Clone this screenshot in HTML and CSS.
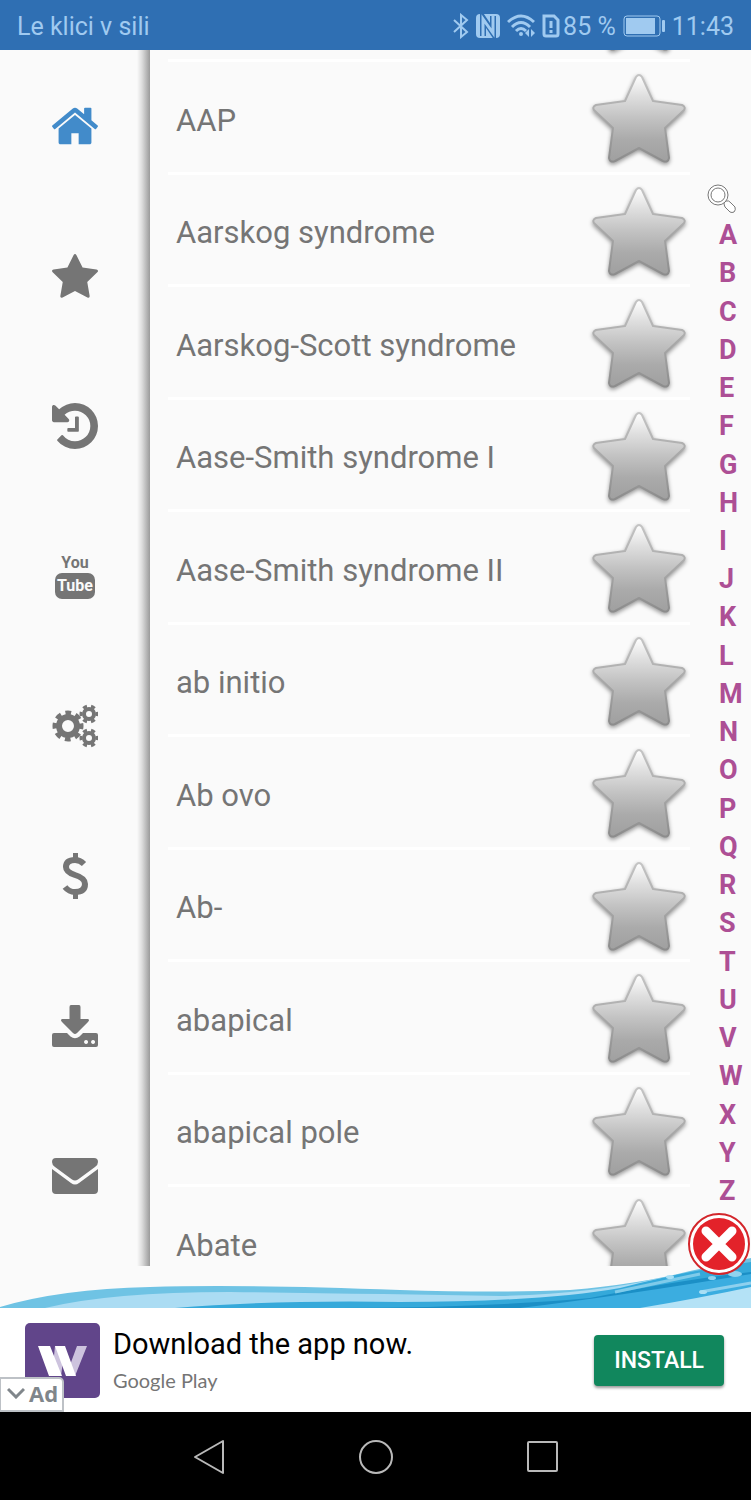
FILE: index.html
```html
<!DOCTYPE html>
<html lang="en">
<head>
    <meta charset="UTF-8">
    <meta name="viewport" content="width=device-width, initial-scale=1.0">
    <title>Medical Dictionary</title>
    <link rel="stylesheet" href="styles.css">
</head>
<body>
    <!-- Shared shapes -->
    <svg class="defs" width="0" height="0" aria-hidden="true">
        <defs>
            <linearGradient id="starFill" x1="0" y1="0" x2="0" y2="1">
                <stop offset="0" stop-color="#ffffff"/>
                <stop offset="0.25" stop-color="#dedede"/>
                <stop offset="0.5" stop-color="#c2c2c2"/>
                <stop offset="0.75" stop-color="#aaaaaa"/>
                <stop offset="1" stop-color="#a0a0a0"/>
            </linearGradient>
            <linearGradient id="starEdge" x1="0" y1="0" x2="0" y2="1">
                <stop offset="0" stop-color="#c4c4c4"/>
                <stop offset="1" stop-color="#8c8c8c"/>
            </linearGradient>
            <symbol id="star" viewBox="0 0 94 94">
                <path d="M44 4Q47 0 50 4L61 28L90 32Q94 34 92 37L73 55L77 85Q76 90 71 88L47 75L23 88Q18 90 17 85L21 55L2 37Q0 34 4 32L33 28Z" fill="url(#starFill)" stroke="url(#starEdge)" stroke-width="2" stroke-linejoin="round"/>
            </symbol>
        </defs>
    </svg>

    <header class="status-bar">
        <span>Le klici v sili</span>
        <div class="status-icons">
            <svg width="16" height="26" viewBox="0 0 16 26" fill="none" stroke="currentColor" stroke-width="2"><path d="M1 7L14 19L8 24V2L14 7L1 19"/></svg>
            <svg width="24" height="24" viewBox="0 0 24 24"><rect x="0" y="0" width="24" height="24" rx="4" fill="currentColor"/><path d="M7 22V4L17 19V2" fill="none" stroke="#2f6fb3" stroke-width="6"/><path d="M7 22V5L17 19V2" fill="none" stroke="currentColor" stroke-width="3"/></svg>
            <svg width="28" height="24" viewBox="0 0 28 24" fill="none" stroke="currentColor" stroke-width="3"><path d="M1 8Q14 -4 27 8M5 13Q14 4 23 13M9 17Q14 12 19 17"/><circle cx="14" cy="20" r="2" fill="currentColor" stroke="none"/><path d="M22 15V23L18 19ZM24 15V23L28 19Z" fill="currentColor" stroke="none"/></svg>
            <svg width="18" height="24" viewBox="0 0 18 24" fill="none" stroke="currentColor" stroke-width="3"><path d="M2 2H12L16 6V20Q16 22 14 22H4Q2 22 2 20Z"/><path d="M9 7V14M9 16V19"/></svg>
            <span class="battery-level">85 %</span>
            <svg width="42" height="22" viewBox="0 0 42 22"><rect x="1" y="1" width="36" height="20" rx="3" fill="none" stroke="currentColor" stroke-width="1"/><rect x="3" y="3" width="29" height="16" fill="currentColor"/><rect x="39" y="5" width="3" height="12" rx="1" fill="currentColor"/></svg>
            <span>11:43</span>
        </div>
    </header>

    <main class="content">
        <svg class="wave" viewBox="0 0 751 50" preserveAspectRatio="none" aria-hidden="true">
            <path d="M0 49Q60 31 150 29Q240 26 400 32Q500 35 570 32Q640 26 690 13L751 0V50H0Z" fill="#6fc3e4"/>
            <path d="M45 50Q110 34 230 34Q380 36 500 38Q590 36 660 20L751 6V50Z" fill="#abdcf3"/>
            <path d="M175 50Q270 42 400 44Q540 44 620 30Q690 12 751 4V50Z" fill="#35a9da"/>
            <path d="M340 50Q480 50 590 40Q680 22 751 14V22Q680 30 600 50Z" fill="#1b8fc6"/>
            <path d="M520 50Q620 38 751 16V50Z" fill="#3bade0"/>
            <path d="M640 50Q700 40 751 29V50Z" fill="#b4e2f6"/>
            <path d="M700 34L751 25" stroke="#8ed0ee" stroke-width="3"/>
            <path d="M615 34L700 16" stroke="#7fcbea" stroke-width="3" fill="none"/>
            <ellipse cx="735" cy="16" rx="7" ry="3" fill="#8fd3ef"/>
            <ellipse cx="712" cy="20" rx="4" ry="2" fill="#8fd3ef"/>
            <ellipse cx="703" cy="34" rx="4" ry="2" fill="#a8dff5"/>
            <ellipse cx="670" cy="19" rx="4" ry="2" fill="#a8dff5"/>
        </svg>

        <nav class="sidebar">
            <a class="active" href="#home" aria-label="Home">
                <svg viewBox="89 89 1614 1614"><path d="M1472 992v480q0 26-19 45t-45 19h-384v-384h-256v384h-384q-26 0-45-19t-19-45v-480q0-1 .5-3t.5-3l575-474 575 474q1 2 1 6zm223-69l-62 74q-8 9-21 11h-3q-13 0-21-7l-692-577-692 577q-12 8-24 7-13-2-21-11l-62-74q-8-10-7-23.5t11-21.5l719-599q32-26 76-26t76 26l244 204v-195q0-14 9-23t23-9h192q14 0 23 9t9 23v408l219 182q10 8 11 21.5t-7 23.5z"/></svg>
            </a>
            <a href="#favorites" aria-label="Favorites">
                <svg viewBox="64 0 1664 1664"><path d="M1728 647q0 22-26 48l-363 354 86 500q1 7 1 20 0 21-10.5 35.5t-30.5 14.5q-19 0-40-12l-449-236-449 236q-22 12-40 12-21 0-31.5-14.5t-10.5-35.5q0-6 2-20l86-500-364-354q-25-27-25-48 0-37 56-46l502-73 225-455q19-41 49-41t49 41l225 455 502 73q56 9 56 46z"/></svg>
            </a>
            <a href="#history" aria-label="History">
                <svg viewBox="128 128 1536 1536"><path d="M1664 896q0 156-61 298t-164 245-245 164-298 61q-172 0-327-72.5t-264-204.5q-7-10-6.5-22.5t8.5-20.5l137-138q10-9 25-9 16 2 23 12 73 95 179 147t225 52q104 0 198.5-40.5t163.5-109.5 109.5-163.5 40.5-198.5-40.5-198.5-109.5-163.5-163.5-109.5-198.5-40.5q-98 0-188 35.5t-160 101.5l137 138q31 30 14 69-17 40-59 40h-448q-26 0-45-19t-19-45v-448q0-42 40-59 39-17 69 14l130 129q107-101 244.5-156.5t284.5-55.5q156 0 298 61t245 164 164 245 61 298zm-640-288v448q0 14-9 23t-23 9h-320q-14 0-23-9t-9-23v-64q0-14 9-23t23-9h224v-352q0-14 9-23t23-9h64q14 0 23 9t9 23z"/></svg>
            </a>
            <a class="youtube" href="#youtube">
                <span class="you">You</span>
                <span class="tube">Tube</span>
            </a>
            <a href="#settings" aria-label="Settings">
                <svg class="outline" viewBox="0 0 46 46">
                    <circle cx="16" cy="23" r="9" stroke-width="6"/>
                    <circle cx="16" cy="23" r="13" stroke-width="5" pathLength="160" stroke-dasharray="11 9" stroke-dashoffset="5"/>
                    <circle cx="37" cy="11" r="5" stroke-width="4"/>
                    <circle cx="37" cy="11" r="8" stroke-width="3" pathLength="120" stroke-dasharray="10 10" stroke-dashoffset="5"/>
                    <circle cx="37" cy="35" r="5" stroke-width="4"/>
                    <circle cx="37" cy="35" r="8" stroke-width="3" pathLength="120" stroke-dasharray="10 10" stroke-dashoffset="5"/>
                </svg>
            </a>
            <a href="#donate" aria-label="Donate">
                <svg viewBox="0 0 46 46"><path d="M32 11Q28 7 23 7Q14 7 14 14Q14 19 23 22Q33 25 33 31Q33 39 23 39Q17 39 13 34" fill="none" stroke="currentColor" stroke-width="6"/><path d="M21 0H26V8H21ZM21 38H26V46H21Z"/></svg>
            </a>
            <a href="#download" aria-label="Download">
                <svg viewBox="0 0 46 46"><path d="M19 2H27Q28.500 2 28.500 4V16H36Q38 17 36 19L25 30Q23 32 21 30L10 19Q8 17 10 16H17.500V4Q17.500 2 19 2Z"/><path fill-rule="evenodd" d="M2 30H15L18.500 33.500Q23 37 27.500 33.500L31 30H44Q46 30 46 32V42Q46 44 44 44H2Q0 44 0 42V32Q0 30 2 30ZM34 37a2 2 0 1 0 0.100 0ZM41 37a2 2 0 1 0 0.100 0Z"/></svg>
            </a>
            <a href="#contact" aria-label="Contact">
                <svg viewBox="0 0 46 46"><path d="M4 5H42Q46 5 46 9Q46 12 43 14L26 26.500Q23 28.500 20 26.500L3 14Q0 12 0 9Q0 5 4 5Z"/><path d="M0 16L19 30Q23 33 27 30L46 16V37Q46 41 42 41H4Q0 41 0 37Z"/></svg>
            </a>
        </nav>

        <section class="list">
            <ul class="terms">
                <li><span></span><button aria-label="Favorite"><svg><use href="#star"/></svg></button></li>
                <li><span>AAP</span><button aria-label="Favorite"><svg><use href="#star"/></svg></button></li>
                <li><span>Aarskog syndrome</span><button aria-label="Favorite"><svg><use href="#star"/></svg></button></li>
                <li><span>Aarskog-Scott syndrome</span><button aria-label="Favorite"><svg><use href="#star"/></svg></button></li>
                <li><span>Aase-Smith syndrome I</span><button aria-label="Favorite"><svg><use href="#star"/></svg></button></li>
                <li><span>Aase-Smith syndrome II</span><button aria-label="Favorite"><svg><use href="#star"/></svg></button></li>
                <li><span>ab initio</span><button aria-label="Favorite"><svg><use href="#star"/></svg></button></li>
                <li><span>Ab ovo</span><button aria-label="Favorite"><svg><use href="#star"/></svg></button></li>
                <li><span>Ab-</span><button aria-label="Favorite"><svg><use href="#star"/></svg></button></li>
                <li><span>abapical</span><button aria-label="Favorite"><svg><use href="#star"/></svg></button></li>
                <li><span>abapical pole</span><button aria-label="Favorite"><svg><use href="#star"/></svg></button></li>
                <li><span>Abate</span><button aria-label="Favorite"><svg><use href="#star"/></svg></button></li>
            </ul>
        </section>

        <nav class="index">
            <button class="search" aria-label="Search">
                <svg width="30" height="30" viewBox="0 0 30 30" fill="#fff" stroke="#777">
                    <path d="M17 19L19 17Q22 16 24 19L28 23Q29 26 27 28Q25 29 23 28L18 23Q17 21 17 19Z"/>
                    <circle cx="11" cy="11" r="10"/>
                    <circle cx="11" cy="11" r="7"/>
                </svg>
            </button>
            <a href="#A">A</a>
            <a href="#B">B</a>
            <a href="#C">C</a>
            <a href="#D">D</a>
            <a href="#E">E</a>
            <a href="#F">F</a>
            <a href="#G">G</a>
            <a href="#H">H</a>
            <a href="#I">I</a>
            <a href="#J">J</a>
            <a href="#K">K</a>
            <a href="#L">L</a>
            <a href="#M">M</a>
            <a href="#N">N</a>
            <a href="#O">O</a>
            <a href="#P">P</a>
            <a href="#Q">Q</a>
            <a href="#R">R</a>
            <a href="#S">S</a>
            <a href="#T">T</a>
            <a href="#U">U</a>
            <a href="#V">V</a>
            <a href="#W">W</a>
            <a href="#X">X</a>
            <a href="#Y">Y</a>
            <a href="#Z">Z</a>
        </nav>

        <button class="close" aria-label="Close ad">
            <svg width="64" height="64" viewBox="0 0 64 64">
                <circle cx="32" cy="32" r="30" fill="#fff" stroke="#d3262b" stroke-width="2"/>
                <circle cx="32" cy="32" r="26" fill="#e3222a"/>
                <path d="M19 19L45 45M45 19L19 45" stroke="#fff" stroke-width="9" stroke-linecap="round"/>
            </svg>
        </button>
    </main>

    <aside class="ad">
        <svg class="ad-logo" width="75" height="75" viewBox="0 0 75 75" aria-hidden="true">
            <rect width="75" height="75" rx="5" fill="#61458a"/>
            <path d="M52 23H62L50 53H41ZM30 23H40L36 53H27Z" fill="#cdc3de"/>
            <path d="M13 23H25L37 53H24ZM30 23H40L51 53H41Z" fill="#fff"/>
        </svg>
        <div class="ad-text">
            <p class="ad-title">Download the app now.</p>
            <p class="ad-store">Google Play</p>
        </div>
        <button class="install">INSTALL</button>
        <button class="ad-badge">
            <svg width="18" height="12" viewBox="0 0 18 12" fill="none" stroke="#80868b" stroke-width="3"><path d="M1 2L9 10L17 2"/></svg>
            Ad
        </button>
    </aside>

    <footer class="nav-bar">
        <button aria-label="Back"><svg width="36" height="36" viewBox="0 0 36 36"><path d="M32 3V35L4 19Z"/></svg></button>
        <button aria-label="Home"><svg width="36" height="36" viewBox="0 0 36 36"><circle cx="18" cy="19" r="16"/></svg></button>
        <button aria-label="Recent apps"><svg width="36" height="36" viewBox="0 0 36 36"><rect x="3" y="4" width="29" height="29" rx="1"/></svg></button>
    </footer>
</body>
</html>
```

FILE: styles.css
```css
/* Global styles */
* {
    box-sizing: border-box;
}

body {
    display: flex;
    flex-direction: column;
    height: 100vh;
    margin: 0;
    font-family: Roboto, sans-serif;
    background-color: #fafafa;
    color: #757575;
}

button {
    padding: 0;
    border: none;
    background: none;
    font-family: inherit;
    cursor: pointer;
}

a {
    color: inherit;
    text-decoration: none;
}

svg {
    display: block;
    flex-shrink: 0;
}

.defs {
    position: absolute;
}

/* Status bar */
.status-bar {
    display: flex;
    align-items: center;
    justify-content: space-between;
    height: 50px;
    flex-shrink: 0;
    padding: 2px 17px 0;
    background-color: #2f6fb3;
    color: #a0caf0;
    font-size: 25px;
}

.status-icons {
    display: flex;
    align-items: center;
    gap: 7px;
}

.battery-level {
    margin-left: -4px;
}

/* Main area */
.content {
    position: relative;
    display: grid;
    grid-template-columns: 150px 1fr 61px;
    grid-template-rows: minmax(0, 1fr);
    flex: 1;
    min-height: 0;
    padding-bottom: 42px;
}

.wave {
    position: absolute;
    left: 0;
    bottom: 0;
    width: 100%;
    height: 50px;
}

/* Sidebar */
.sidebar {
    position: relative;
    padding-top: 1px;
    background: linear-gradient(to right, transparent 137px, #dcdcdc 142px, #9a9a9a 150px);
    overflow: hidden;
}

.sidebar a {
    display: flex;
    flex-direction: column;
    align-items: center;
    justify-content: center;
    height: 150px;
}

.sidebar svg {
    width: 46px;
    height: 46px;
    fill: currentColor;
}

.sidebar .outline {
    fill: none;
    stroke: currentColor;
}

.sidebar .active {
    color: #428bca;
}

.youtube {
    font-family: "Liberation Sans Narrow", Roboto, sans-serif;
    font-size: 16px;
    font-weight: bold;
    line-height: 20px;
}

.tube {
    padding: 3px 2px;
    border-radius: 7px;
    background-color: #757575;
    color: #fafafa;
}

/* Term list */
.list {
    position: relative;
    overflow: hidden;
}

.terms {
    display: grid;
    grid-auto-rows: 1fr;
    height: 111%;
    margin: -100px 0 0 18px;
    padding: 0;
    list-style: none;
}

.terms li {
    display: flex;
    align-items: center;
    justify-content: space-between;
    padding: 6px 4px 0 8px;
    border-bottom: 3px solid #fff;
    font-size: 31px;
}

.terms svg {
    width: 94px;
    height: 94px;
    filter: drop-shadow(0 2px 2px rgba(0, 0, 0, 0.4));
    overflow: visible;
}

/* Alphabet index */
.index {
    position: relative;
    display: flex;
    flex-direction: column;
    padding: 131px 0 56px 29px;
    color: #ad4f95;
    font-size: 27px;
    font-weight: 700;
}

.index a {
    display: flex;
    align-items: center;
    flex: 1;
    min-height: 0;
}

.search {
    height: 35px;
    margin-left: -12px;
}

.close {
    position: absolute;
    right: 0;
    bottom: 32px;
}

/* Ad banner */
.ad {
    position: relative;
    display: flex;
    align-items: center;
    height: 104px;
    flex-shrink: 0;
    padding: 0 27px 0 25px;
    background-color: #fff;
}

.ad-text {
    flex: 1;
    padding-left: 13px;
}

.ad-text p {
    margin: 0;
}

.ad-title {
    color: #000;
    font-size: 29px;
    line-height: 40px;
}

.ad-store {
    font-family: Lato, sans-serif;
    font-size: 20px;
    line-height: 32px;
}

.install {
    padding: 0 20px;
    border-radius: 4px;
    background-color: #11875d;
    color: #fff;
    font-size: 23px;
    font-weight: 500;
    line-height: 51px;
    box-shadow: 0 2px 3px rgba(0, 0, 0, 0.4);
}

.ad-badge {
    position: absolute;
    left: 0;
    bottom: 0;
    display: flex;
    align-items: center;
    gap: 4px;
    height: 35px;
    padding: 0 4px 4px 6px;
    border: 2px solid #bdc1c6;
    border-left-width: 1px;
    border-radius: 0 5px 0 0;
    background-color: #fff;
    color: #80868b;
    font-family: "Open Sans", sans-serif;
    font-size: 22px;
    font-weight: bold;
}

/* Navigation bar */
.nav-bar {
    display: flex;
    align-items: center;
    justify-content: center;
    gap: 131px;
    height: 88px;
    flex-shrink: 0;
    background-color: #000;
}

.nav-bar svg {
    fill: none;
    stroke: #b9b9b9;
    stroke-width: 2;
    stroke-linejoin: round;
}
```
